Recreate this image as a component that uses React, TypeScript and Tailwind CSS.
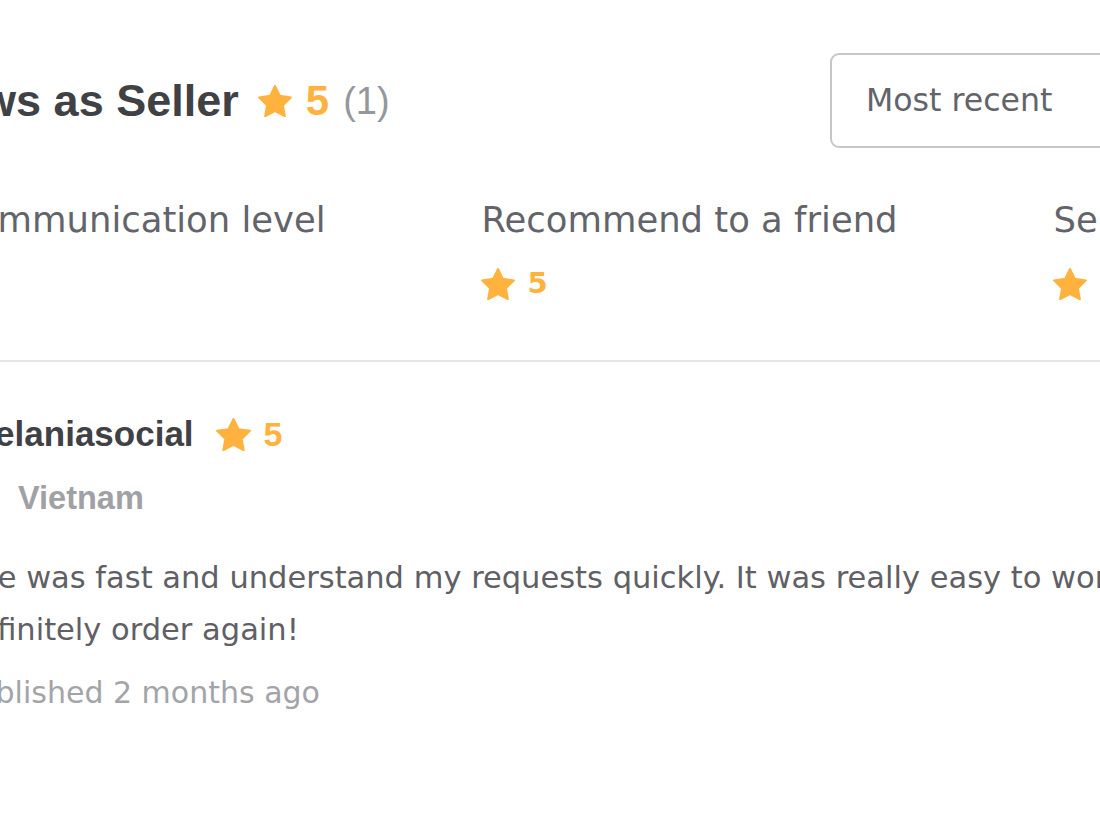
import React from "react";

const Star = ({ className }: { className?: string }) => (
    <svg viewBox="1.5 1.5 21 20" className={className} fill="#ffb33e" stroke="#ffb33e" strokeWidth="1.2" strokeLinejoin="round">
        <path d="M12 2l3.09 6.26L22 9.27l-5 4.87 1.18 6.88L12 17.77l-6.18 3.25L7 14.14 2 9.27l6.91-1.01L12 2z" />
    </svg>
);

const ratings = [
    { label: "Seller communication level", value: 5 },
    { label: "Recommend to a friend", value: 5 },
    { label: "Service as described", value: 5 },
];

const App = () => {
    return (
        <div className="w-[1100px] h-[825px] overflow-hidden bg-white font-['DejaVu_Sans',sans-serif]">
            <div className="-ml-[155px] w-[1385px] pt-[53px]">
                {/* header */}
                <div className="flex items-center justify-between pl-[16px] h-[95px]">
                    <div className="flex items-center font-['Liberation_Sans',Arial,sans-serif]">
                        <h2 className="text-[45px] font-bold text-[#404145] leading-none">Reviews as Seller</h2>
                        <Star className="w-[34px] h-[32px] ml-[19px]" />
                        <span className="ml-[14px] text-[42px] font-bold text-[#ffb33e] leading-none">5</span>
                        <span className="ml-[14px] text-[38px] text-[#95979d] leading-none">(1)</span>
                    </div>
                    <div className="w-[400px] h-[95px] border-2 border-[#c5c6c9] rounded-[9px] flex items-center pl-[34px]">
                        <span className="text-[31.6px] text-[#62646a]">Most recent</span>
                    </div>
                </div>

                {/* rating breakdown */}
                <div className="flex gap-[156px] mt-[50px] pb-[56px]">
                    {ratings.map((r) => (
                        <div key={r.label} className="flex flex-col gap-[22px]">
                            <span className="text-[35.4px] leading-[44px] text-[#62646a] whitespace-nowrap">{r.label}</span>
                            <div className="flex items-center h-[40px] gap-[13px] -ml-[1px]">
                                <Star className="w-[34px] h-[32px]" />
                                <span className="text-[29px] font-bold text-[#ffb33e]">{r.value}</span>
                            </div>
                        </div>
                    ))}
                </div>
            </div>

            <div className="h-[2px] w-full bg-[#e4e5e7]" />

            {/* review */}
            <div className="-ml-[153px] flex pt-[50px]">
                <div className="w-[112px] shrink-0">
                    <div className="w-[86px] h-[86px] rounded-full bg-[#c5c6c9]" />
                </div>
                <div className="flex flex-col">
                    <div className="flex items-center h-[44px] ml-[5px] font-['Liberation_Sans',Arial,sans-serif]">
                        <span className="text-[35px] font-bold text-[#404145]">melaniasocial</span>
                        <Star className="w-[35px] h-[33px] ml-[22px]" />
                        <span className="ml-[13px] text-[34px] font-bold text-[#ffb33e]">5</span>
                    </div>
                    <div className="flex items-center h-[40px] mt-[22px]">
                        <div className="w-[35px] h-[24px] bg-[#da251d] flex items-center justify-center text-[14px] text-[#ffff00] leading-none">★</div>
                        <span className="ml-[24px] text-[32.5px] font-bold text-[#a0a1a5] font-['Liberation_Sans',Arial,sans-serif]">Vietnam</span>
                    </div>
                    <p className="mt-[34px] text-[30.5px] leading-[52px] text-[#5f6065] w-[1400px]">
                        She was fast and understand my requests quickly. It was really easy to work with her. I will
                        <br />
                        definitely order again!
                    </p>
                    <span className="mt-[15px] text-[30px] leading-[44px] text-[#a3a4a8]">Published 2 months ago</span>
                </div>
            </div>
        </div>
    );
};

export default App;
